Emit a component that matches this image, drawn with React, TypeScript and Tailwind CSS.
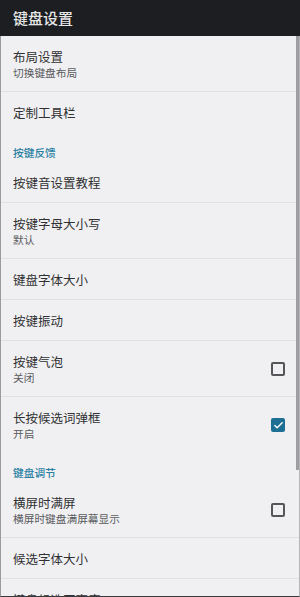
import { Check } from "lucide-react";

type Item =
  | { kind: "category"; title: string }
  | {
      kind: "row";
      title: string;
      summary?: string;
      checkbox?: boolean;
      checked?: boolean;
      divider?: boolean;
    };

const items: Item[] = [
  { kind: "row", title: "布局设置", summary: "切换键盘布局", divider: true },
  { kind: "row", title: "定制工具栏" },
  { kind: "category", title: "按键反馈" },
  { kind: "row", title: "按键音设置教程", divider: true },
  { kind: "row", title: "按键字母大小写", summary: "默认", divider: true },
  { kind: "row", title: "键盘字体大小", divider: true },
  { kind: "row", title: "按键振动", divider: true },
  { kind: "row", title: "按键气泡", summary: "关闭", checkbox: true, divider: true },
  { kind: "row", title: "长按候选词弹框", summary: "开启", checkbox: true, checked: true },
  { kind: "category", title: "键盘调节" },
  { kind: "row", title: "横屏时满屏", summary: "横屏时键盘满屏幕显示", checkbox: true, divider: true },
  { kind: "row", title: "候选字体大小", divider: true },
  { kind: "row", title: "键盘候选区高度", divider: true },
];

const CheckBox = ({ checked }: { checked?: boolean }) =>
  checked ? (
    <div className="w-[14px] h-[14px] rounded-[2px] bg-[#1f6f95] flex items-center justify-center">
      <Check size={11} strokeWidth={3} className="text-white" />
    </div>
  ) : (
    <div className="w-[14px] h-[14px] rounded-[2px] border-2 border-[#555659]" />
  );

export default function App() {
  return (
    <div
      className="relative w-[300px] h-[597px] overflow-hidden bg-[#f0f0f2] flex flex-col"
      style={{ fontFamily: '"Noto Sans CJK SC", "Noto Sans", sans-serif' }}
    >
      <div className="h-[36px] shrink-0 bg-[#1c1e21] flex items-center px-[13px] text-[15px] font-medium text-[#e6e6e6]">
        键盘设置
      </div>

      <div className="flex-1 flex flex-col border-l border-[#9a9a9c] border-r border-r-[#b5b5b7] border-b border-b-[#3a3a3c] overflow-hidden">
        {items.map((item, i) =>
          item.kind === "category" ? (
            <div
              key={i}
              className="h-[29px] shrink-0 pt-[13px] px-[12px] text-[10.7px] leading-[14px] font-medium text-[#2a7fa3]"
            >
              {item.title}
            </div>
          ) : (
            <div
              key={i}
              className={`shrink-0 flex items-center justify-between px-[12px] pr-[14px] ${
                item.summary ? "h-[56px]" : "h-[41px]"
              } ${item.divider ? "border-b border-[#e1e1e3]" : ""}`}
            >
              <div className="flex flex-col">
                <span className="text-[12.5px] leading-[17px] text-[#303133]">
                  {item.title}
                </span>
                {item.summary && (
                  <span className="text-[10.7px] leading-[15px] text-[#5a5b5e]">
                    {item.summary}
                  </span>
                )}
              </div>
              {item.checkbox && <CheckBox checked={item.checked} />}
            </div>
          )
        )}
      </div>

      {/* scrollbar thumb */}
      <div className="absolute right-[1px] top-[36px] w-[3px] h-[434px] bg-[#9d9ea1]" />
    </div>
  );
}
